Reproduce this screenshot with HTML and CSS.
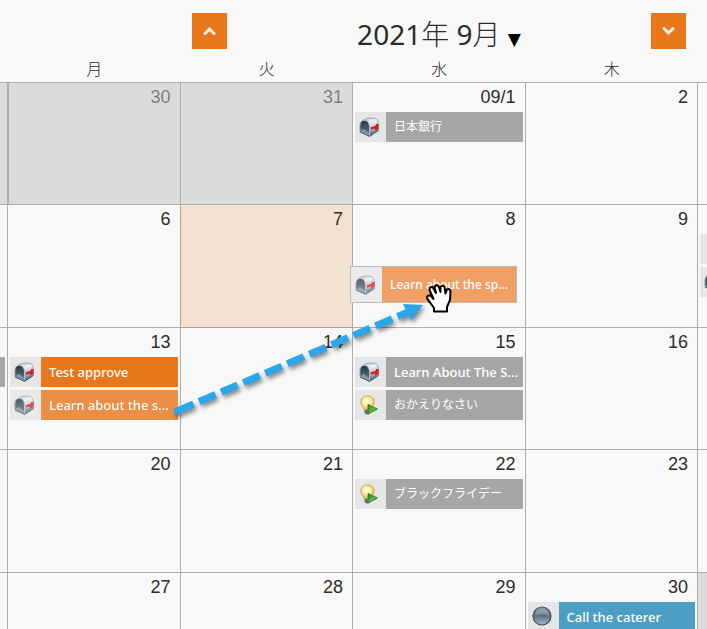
FILE: index.html
```html
<!DOCTYPE html>
<html lang="ja">
<head>
<meta charset="utf-8">
<meta name="viewport" content="width=device-width, initial-scale=1">
<title>2021年 9月</title>
<link rel="stylesheet" href="styles.css">
</head>
<body>
<svg class="defs" width="0" height="0" aria-hidden="true">
  <defs>
    <linearGradient id="metal" x1="0" y1="0" x2=".3" y2="1">
      <stop offset="0" stop-color="#b4bec6"/><stop offset=".35" stop-color="#eef3f7"/><stop offset=".7" stop-color="#a9b9c6"/><stop offset="1" stop-color="#4d6478"/>
    </linearGradient>
    <linearGradient id="inside" x1="0" y1="0" x2="0" y2="1">
      <stop offset="0" stop-color="#26343c"/><stop offset="1" stop-color="#657b8b"/>
    </linearGradient>
    <radialGradient id="glass" cx=".45" cy=".4" r=".6">
      <stop offset="0" stop-color="#fffef0"/><stop offset=".5" stop-color="#fdeea0"/><stop offset="1" stop-color="#dcb64e"/>
    </radialGradient>
    <linearGradient id="sphere" x1="0" y1="0" x2="0" y2="1">
      <stop offset="0" stop-color="#8795a3"/><stop offset=".48" stop-color="#5c6c7c"/><stop offset="1" stop-color="#a3bdd0"/>
    </linearGradient>
    <linearGradient id="play" x1="0" y1="0" x2="1" y2="1">
      <stop offset="0" stop-color="#2c7a20"/><stop offset=".55" stop-color="#62b94c"/><stop offset="1" stop-color="#1f6a16"/>
    </linearGradient>
    <symbol id="mailbox" viewBox="0 0 20 20">
      <path d="M4 3.500Q6 1.500 9 1.200L15 1Q19 1.500 19.500 6V13L10 19.500 6 10Z" fill="url(#metal)" stroke="#7b8993" stroke-width=".6"/>
      <path d="M.8 14.500V8.500Q1.200 3.500 5 3.200 10 3.500 10.500 9.500V18.800Z" fill="url(#inside)" stroke="#b4bec6" stroke-width="1"/>
      <path d="M1.300 14 5 12 10 16V18Z" fill="#7f97a8"/>
      <path d="M1 15 10.500 19.300 19.500 13.500" fill="none" stroke="#3c4f60" stroke-width="1"/>
      <path d="M11.500 10.500 17 8.500V7H19.500V12L16 13.500V11.500L12 12.500Z" fill="#dc1d1d"/>
    </symbol>
    <symbol id="bulb" viewBox="0 0 20 20">
      <path d="M5.500 14.500H11V18L9.500 19.500H7L5.500 18Z" fill="#7d8790"/>
      <path d="M5.500 16H11M6 18H10.500" stroke="#4b555e" stroke-width=".8"/>
      <path d="M8.500 1C4 1 1.500 4 1.800 7.500 2 10.500 4.500 11.500 5 14.500H12C12.500 11.500 15 10.500 15.200 7.500 15.500 4 13 1 8.500 1Z" fill="url(#glass)" stroke="#cda94c" stroke-width="1"/>
      <path d="M9 9.500V19L18.500 14Z" fill="url(#play)" stroke="#26721c" stroke-width=".8" stroke-linejoin="round"/>
    </symbol>
    <symbol id="ball" viewBox="0 0 20 20">
      <circle cx="10" cy="10" r="9" fill="url(#sphere)" stroke="#44505c" stroke-width="1.200"/>
      <path d="M3 9.500C4 0 16 0 17 9.500Q10 6.500 3 9.500Z" fill="#fff" opacity=".2"/>
    </symbol>
  </defs>
</svg>

<header class="toolbar">
  <button class="step" type="button" aria-label="前の月">
    <svg width="15" height="12" viewBox="0 0 15 12"><path d="M3 8.500 7.500 4 12 8.500"/></svg>
  </button>
  <button class="month" type="button">2021<span class="unit">年</span> 9<span class="unit">月</span> <span class="caret">▼</span></button>
  <button class="step" type="button" aria-label="次の月">
    <svg width="15" height="12" viewBox="0 0 15 12"><path d="M3 3.500 7.500 8 12 3.500"/></svg>
  </button>
</header>

<main class="calendar">
  <table class="grid">
    <colgroup><col class="edge-left"><col><col><col><col><col class="edge-right"></colgroup>
    <thead>
      <tr><th></th><th scope="col">月</th><th scope="col">火</th><th scope="col">水</th><th scope="col">木</th><th></th></tr>
    </thead>
    <tbody>
      <tr>
        <td class="other"></td>
        <td class="other first"><div class="day">30</div></td>
        <td class="other"><div class="day">31</div></td>
        <td><div class="day">09/1</div>
          <div class="event gray"><span class="icon"><svg><use href="#mailbox"/></svg></span><span class="label cjk">日本銀行</span></div>
        </td>
        <td><div class="day">2</div></td>
        <td></td>
      </tr>
      <tr class="tall">
        <td></td>
        <td class="before-today"><div class="day">6</div></td>
        <td class="today"><div class="day">7</div></td>
        <td><div class="day">8</div>
          <div class="dragged"><span class="icon"><svg><use href="#mailbox"/></svg></span><span class="label">Learn about the sp...</span></div>
        </td>
        <td><div class="day">9</div></td>
        <td><div class="day"></div>
          <div class="event"><span class="icon"></span></div>
          <div class="event"><span class="icon"><svg><use href="#mailbox"/></svg></span></div>
        </td>
      </tr>
      <tr>
        <td><div class="day"></div><div class="event gray sliver"></div></td>
        <td><div class="day">13</div>
          <div class="event orange"><span class="icon"><svg><use href="#mailbox"/></svg></span><span class="label">Test approve</span></div>
          <div class="event orange faded"><span class="icon"><svg><use href="#mailbox"/></svg></span><span class="label">Learn about the s...</span></div>
        </td>
        <td><div class="day">14</div></td>
        <td><div class="day">15</div>
          <div class="event gray"><span class="icon"><svg><use href="#mailbox"/></svg></span><span class="label">Learn About The S...</span></div>
          <div class="event gray"><span class="icon"><svg><use href="#bulb"/></svg></span><span class="label cjk">おかえりなさい</span></div>
        </td>
        <td><div class="day">16</div></td>
        <td></td>
      </tr>
      <tr class="tall">
        <td></td>
        <td><div class="day">20</div></td>
        <td><div class="day">21</div></td>
        <td><div class="day">22</div>
          <div class="event gray"><span class="icon"><svg><use href="#bulb"/></svg></span><span class="label cjk">ブラックフライデー</span></div>
        </td>
        <td><div class="day">23</div></td>
        <td></td>
      </tr>
      <tr class="clipped">
        <td></td>
        <td><div class="day">27</div></td>
        <td><div class="day">28</div></td>
        <td><div class="day">29</div></td>
        <td><div class="day">30</div>
          <div class="event blue"><span class="icon"><svg><use href="#ball"/></svg></span><span class="label">Call the caterer</span></div>
        </td>
        <td class="other"></td>
      </tr>
    </tbody>
  </table>

  <svg class="drag-path" width="300" height="150" viewBox="170 280 300 150" aria-hidden="true">
    <g class="arrow">
      <path d="M177 411 408 312" stroke="#2ba6ea" stroke-width="7" stroke-dasharray="18 6"/>
      <circle cx="177" cy="411" r="3.500" fill="#2ba6ea"/>
      <path d="M403 304 423 305 411 320Z" fill="#2ba6ea"/>
    </g>
    <path d="M434 311.500V308L430 302.500Q427 299 427 297 428 294.500 431 296L433.500 299 429.500 290Q429.500 286.500 432.500 287L436 293 434.500 287Q436 284 438.500 286L440.500 292V287Q442.500 284.500 444.500 287L445.500 293.500 447 289.500Q449.500 288 450.500 291L450 300 447 307V311.500Z" fill="#fff" stroke="#000" stroke-width="2" stroke-linejoin="round"/>
  </svg>
</main>
</body>
</html>
```

FILE: styles.css
```css
* {
  box-sizing: border-box;
}

body {
  margin: 0;
  background: #f8f8f8;
  color: #2b2b2b;
  font-family: "Noto Sans", "Noto Sans CJK JP", sans-serif;
}

.defs {
  position: absolute;
}

.toolbar {
  display: flex;
  justify-content: space-between;
  align-items: flex-start;
  height: 60px;
  padding: 13px 21px 0 192px;
}

.step {
  display: flex;
  align-items: center;
  justify-content: center;
  width: 35px;
  height: 36px;
  padding: 0;
  border: 0;
  background: #e8761a;
}

.step path {
  fill: none;
  stroke: #fbf3ea;
  stroke-width: 3;
  stroke-linecap: round;
}

.month {
  padding: 0;
  border: 0;
  background: none;
  color: #2b2b2b;
  font-family: "Noto Sans", "Noto Sans CJK JP", sans-serif;
  font-size: 28px;
  font-weight: 400;
  line-height: 40px;
}

.unit {
  font-family: "Noto Sans CJK JP", sans-serif;
  font-weight: 300;
}

.caret {
  color: #000;
  font-family: "DejaVu Sans", sans-serif;
  font-size: 17px;
}

.calendar {
  position: relative;
}

.grid {
  width: 100%;
  table-layout: fixed;
  border-collapse: separate;
  border-spacing: 0;
}

.edge-left {
  width: 8px;
}

.edge-right {
  width: 9px;
}

th {
  height: 23px;
  padding: 0 0 3px;
  border-bottom: 1px solid #aeaeae;
  font-size: 16px;
  font-weight: 300;
  line-height: 19px;
}

td {
  position: relative;
  height: 122px;
  padding: 0 2px;
  border-right: 1px solid #aeaeae;
  border-bottom: 1px solid #aeaeae;
  vertical-align: top;
}

.tall td {
  height: 123px;
}

.clipped td {
  height: 56px;
  border-bottom: 0;
}

.clipped .event {
  height: 27px;
  margin-bottom: 0;
}

td:first-child {
  padding: 0 2px 0 0;
}

td:last-child {
  overflow: hidden;
  border-right: 0;
}

.other {
  background: #dbdbdb;
  color: #808080;
}

.first {
  border-left: 1px solid #aeaeae;
}

.today {
  border-color: #b9a594;
  background: #f3e2d1;
}

.before-today {
  border-right-color: #b9a594;
}

.day {
  height: 29px;
  padding-right: 7px;
  font-family: "Liberation Sans", sans-serif;
  font-size: 18px;
  line-height: 29px;
  text-align: right;
}

.event {
  display: flex;
  height: 30px;
  margin-bottom: 3px;
}

.icon {
  display: flex;
  flex: none;
  align-items: center;
  width: 31px;
  padding-left: 4px;
  background: #e6e6e6;
}

.icon svg {
  width: 20px;
  height: 20px;
}

.label {
  flex: 1;
  min-width: 0;
  padding-left: 8px;
  overflow: hidden;
  color: #fff;
  font-size: 13px;
  font-weight: 500;
  line-height: 30px;
  white-space: nowrap;
}

.cjk {
  font-size: 12px;
  font-weight: 400;
}

.gray .label,
.sliver {
  background: #a6a6a6;
}

.orange .label {
  background: #e8761a;
}

.blue .label {
  background: #4d9ec4;
}

.faded {
  opacity: 0.8;
}

.dragged {
  position: absolute;
  top: 61px;
  left: -3px;
  z-index: 1;
  display: flex;
  width: 167px;
  height: 37px;
  border: 1px solid #bcbcbc;
  background: #ebebeb;
}

.dragged .icon {
  background: #ebebeb;
}

.dragged .icon svg {
  opacity: 0.75;
}

.dragged .label {
  background: #f0a064;
  font-size: 12px;
  line-height: 35px;
}

.drag-path {
  position: absolute;
  top: 220px;
  left: 170px;
  z-index: 2;
  pointer-events: none;
}

.arrow {
  filter: drop-shadow(2px 3px 2px rgba(0, 0, 0, 0.45));
}
```
